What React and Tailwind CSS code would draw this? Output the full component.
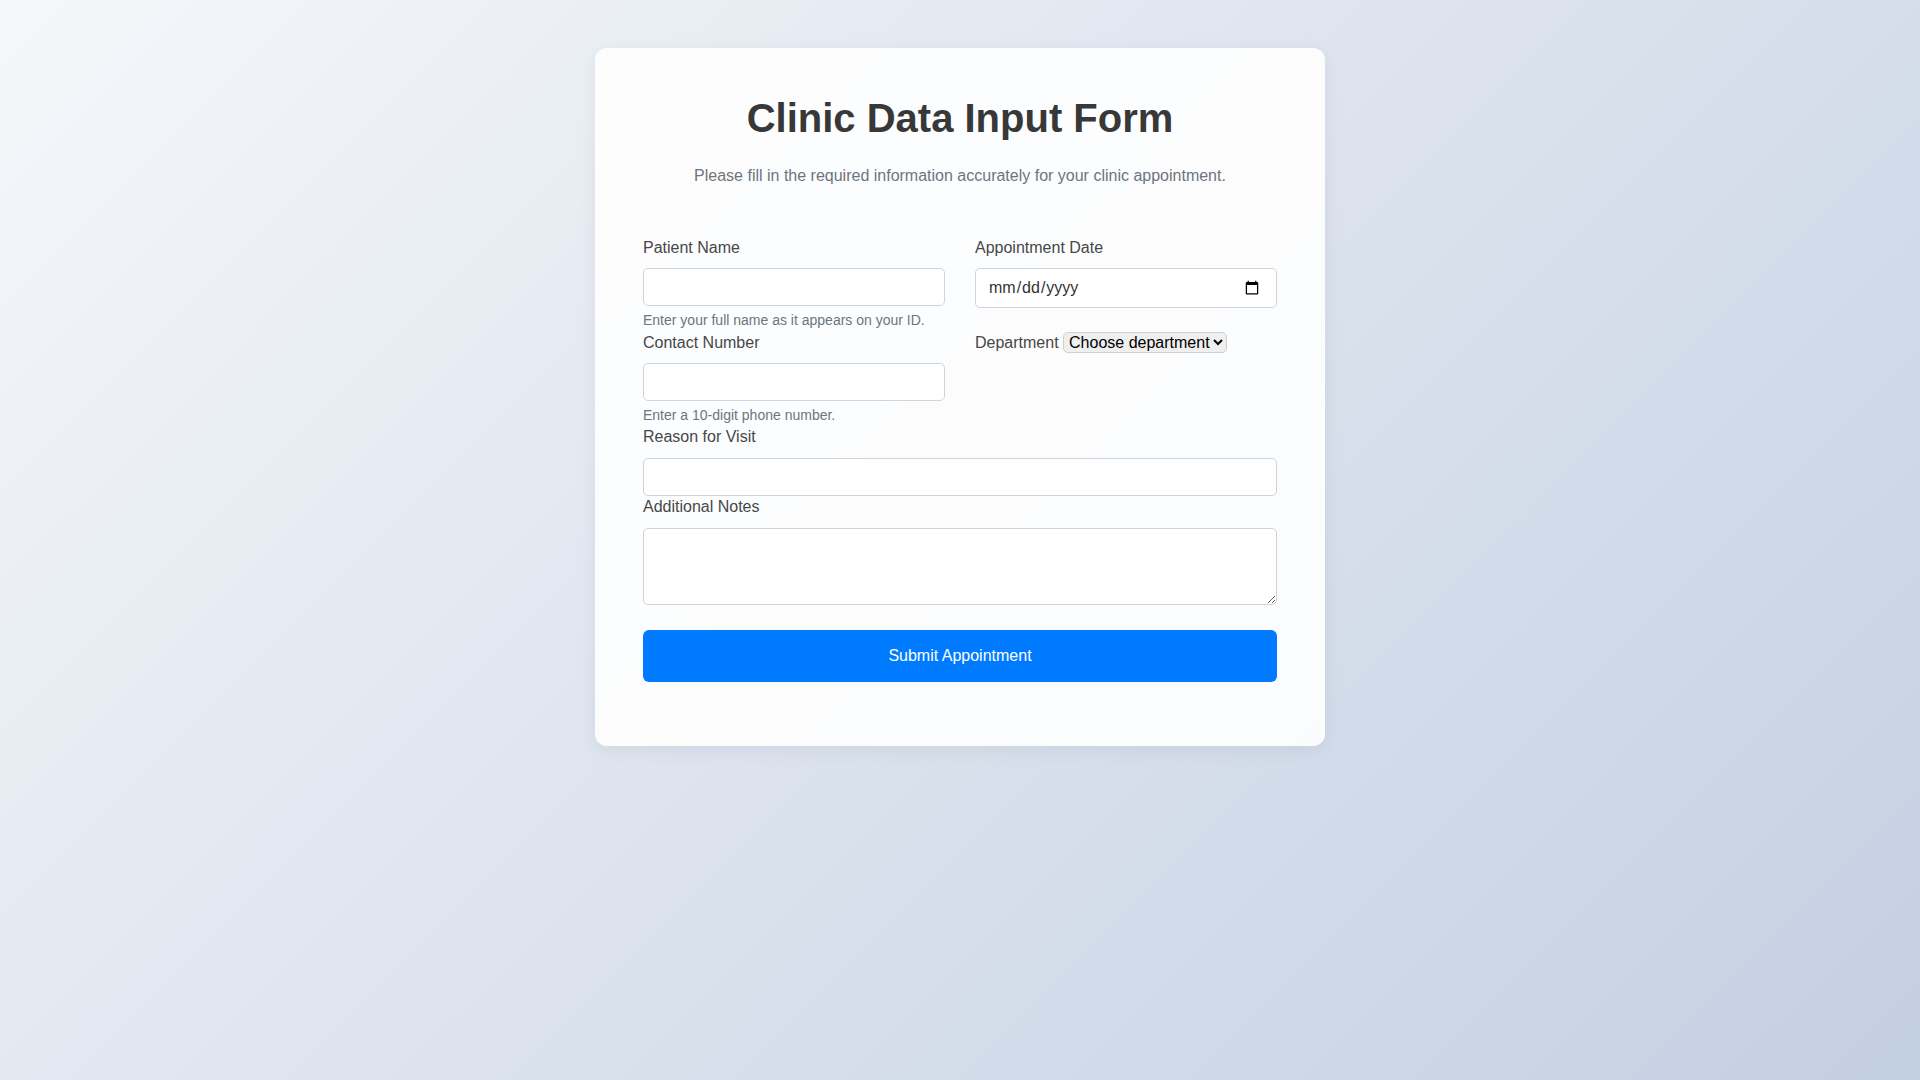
import React from "react";

export default function App() {
  return (
    <div
      className="min-h-screen w-full bg-[linear-gradient(135deg,#f5f7fa_0%,#c3cfe2_100%)] pt-[48px] font-['Liberation_Sans',Arial,sans-serif]"
    >
      <div className="mx-auto w-[730px] rounded-xl bg-white/90 px-12 pt-[46px] pb-16 shadow-[0_4px_20px_rgba(0,0,0,0.06)]">
        <h1 className="text-center text-[40px] font-bold leading-[48px] text-[#383838]">
          Clinic Data Input Form
        </h1>
        <p className="mt-[22px] text-center text-base leading-6 text-[#6c757d]">
          Please fill in the required information accurately for your clinic appointment.
        </p>

        <form className="mt-[48px]" onSubmit={(e) => e.preventDefault()}>
          <div className="grid grid-cols-2 gap-x-[30px] gap-y-px">
            <div>
              <label className="mb-[8px] block text-base leading-6 text-[#474747]">Patient Name</label>
              <input
                type="text"
                className="block h-[38px] w-full rounded-[5px] border border-[#ced4da] bg-white px-3 text-base text-[#333] outline-none"
              />
              <div className="mt-[4px] text-sm leading-5 text-[#6c757d]">
                Enter your full name as it appears on your ID.
              </div>
            </div>
            <div>
              <label className="mb-[8px] block text-base leading-6 text-[#474747]">Appointment Date</label>
              <input
                type="date"
                className="block h-[40px] w-full rounded-[5px] border border-[#ced4da] bg-white pl-3 pr-[14px] text-base text-[#333] outline-none"
              />
            </div>
            <div>
              <label className="mb-[8px] block text-base leading-6 text-[#474747]">Contact Number</label>
              <input
                type="tel"
                className="block h-[38px] w-full rounded-[5px] border border-[#ced4da] bg-white px-3 text-base text-[#333] outline-none"
              />
              <div className="mt-[4px] text-sm leading-5 text-[#6c757d]">
                Enter a 10-digit phone number.
              </div>
            </div>
            <div className="text-base leading-6">
              <label className="text-[#474747]">Department</label>{" "}
              <select
                defaultValue=""
                className="h-[21px] rounded-[5px] border border-[#cfcfcf] bg-[#efefef] pl-[1px] text-base leading-[18px] text-black"
              >
                <option value="" disabled>
                  Choose department
                </option>
                <option>General Medicine</option>
                <option>Pediatrics</option>
                <option>Cardiology</option>
                <option>Dermatology</option>
              </select>
            </div>
          </div>

          <div>
            <label className="mb-[9px] block text-base leading-6 text-[#474747]">Reason for Visit</label>
            <input
              type="text"
              className="block h-[38px] w-full rounded-[5px] border border-[#ced4da] bg-white px-3 text-base text-[#333] outline-none"
            />
          </div>
          <div className="-mt-px">
            <label className="mb-[9px] block text-base leading-6 text-[#474747]">Additional Notes</label>
            <textarea
              className="block h-[77px] w-full rounded-[5px] border border-[#ced4da] bg-white px-3 py-2 text-base text-[#333] outline-none"
            />
          </div>

          <button
            type="submit"
            className="mt-[25px] block h-[52px] w-full rounded-[6px] bg-[#007bff] text-base text-white"
          >
            Submit Appointment
          </button>
        </form>
      </div>
    </div>
  );
}
